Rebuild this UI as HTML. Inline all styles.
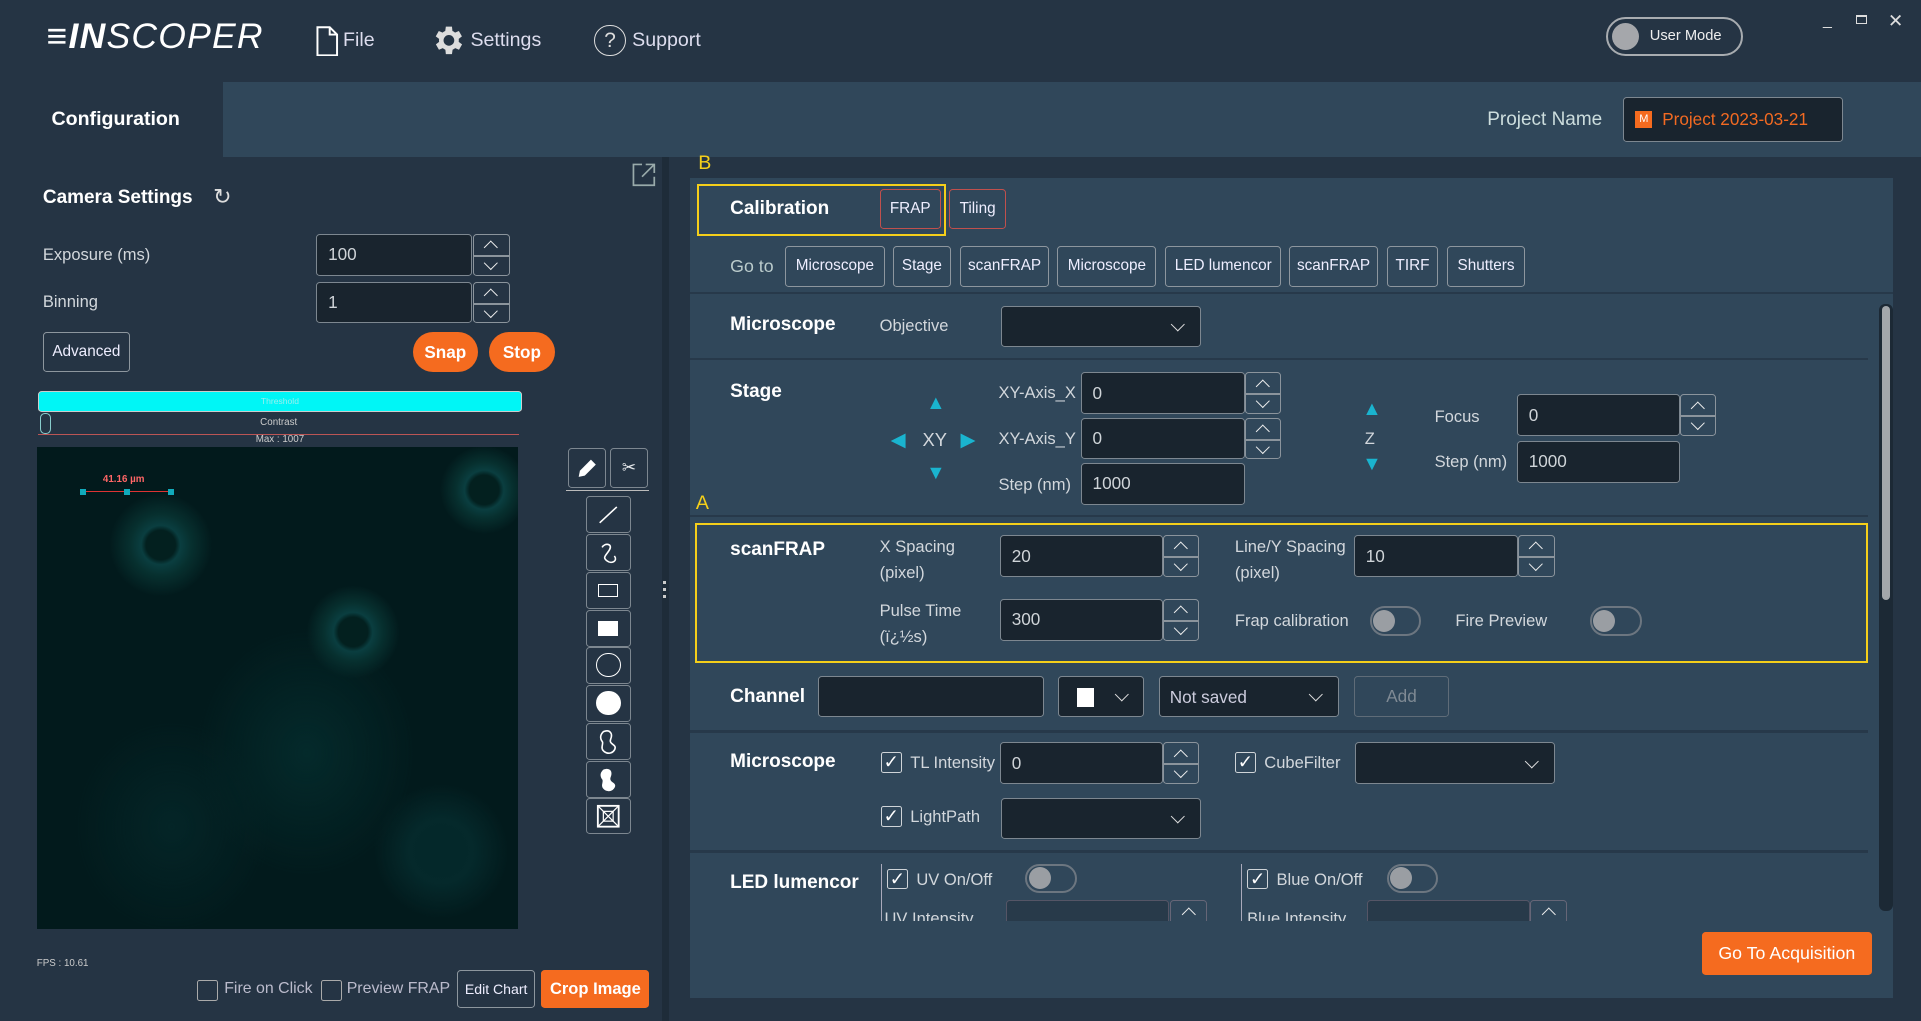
<!DOCTYPE html>
<html><head><meta charset="utf-8"><style>
*{box-sizing:border-box;margin:0;padding:0}
html,body{width:1921px;height:1021px;overflow:hidden;background:#253444}
#w{zoom:1.2251;width:1568px;height:834px;position:relative;font-family:"Liberation Sans",sans-serif;color:#e6e9ec;font-size:14px}
.a{position:absolute;white-space:nowrap}
.h{font-weight:bold;font-size:15.5px;color:#fff}
.l{color:#d2d7dc;font-size:13.5px}
.in{position:absolute;background:#19242e;border:1px solid #7d8790;border-radius:3px;color:#cfd4d8;font-size:14px;padding-left:9px;display:flex;align-items:center}
.sp{position:absolute;width:30px;border:1px solid #8b949c;border-radius:3px}
.sp div{height:50%;display:flex;align-items:center;justify-content:center}
.sp div+div{border-top:2px solid #8b949c}
.up:before,.dn:before{content:"";width:7px;height:7px;border-left:1.4px solid #eee;border-top:1.4px solid #eee;transform:translateY(2px) rotate(45deg)}
.dn:before{transform:translateY(-2px) rotate(225deg)}
.btn{position:absolute;border:1px solid #8d969e;border-radius:3px;color:#eef;font-size:12.5px;display:flex;align-items:center;justify-content:center}
.or{position:absolute;background:#f56b1f;color:#fff;font-size:14px;display:flex;align-items:center;justify-content:center;border-radius:3px}
.dd{position:absolute;background:#19242e;border:1px solid #7d8790;border-radius:3px}
.dd:after{content:"";position:absolute;right:14px;top:50%;width:7px;height:7px;border-right:1.5px solid #ddd;border-bottom:1.5px solid #ddd;transform:translateY(-70%) rotate(45deg)}
.tg{position:absolute;width:42px;height:24px;border:2px solid #6c7680;border-radius:12px}
.tg:before{content:"";position:absolute;left:1px;top:1px;width:18px;height:18px;border-radius:50%;background:#9a9ea3}
.cb{position:absolute;width:17px;height:17px;border:1.5px solid #cfd4d8;border-radius:2px;font-size:15px;line-height:14px;text-align:center;color:#fff}
.sep{position:absolute;left:563px;height:2px;background:#27394a}
.tb{position:absolute;left:478px;width:37px;height:30px;border:1px solid #7d8790;border-radius:3px;display:flex;align-items:center;justify-content:center}
</style></head><body><div id="w">
<div class="a" style="left:38px;top:13px;font-size:29px;font-style:italic;letter-spacing:1px;color:#fff"><b>≡IN</b>SCOPER</div>
<svg class="a" style="left:257px;top:21px" width="20" height="25"><path d="M2 1h10l6 6v17H2z M12 1v6h6" fill="none" stroke="#fff" stroke-width="1.6"/></svg>
<div class="a" style="left:280px;top:24px;font-size:16px;color:#dde">File</div>
<svg class="a" style="left:350px;top:18px" width="30" height="30" viewBox="0 0 24 24"><path fill="#ddd" d="M19.4 13a7.5 7.5 0 000-2l2.1-1.6-2-3.5-2.5 1a7 7 0 00-1.7-1L15 3h-4l-.4 2.9a7 7 0 00-1.7 1l-2.5-1-2 3.5L6.6 11a7.5 7.5 0 000 2l-2.1 1.6 2 3.5 2.5-1a7 7 0 001.7 1L11 21h4l.4-2.9a7 7 0 001.7-1l2.5 1 2-3.5zM13 15.5a3.5 3.5 0 110-7 3.5 3.5 0 010 7z"/></svg>
<div class="a" style="left:384px;top:24px;font-size:16px;color:#dde">Settings</div>
<div class="a" style="left:485px;top:20px;width:26px;height:26px;border:1.3px solid #ddd;border-radius:50%;text-align:center;font-size:17px;line-height:24px;color:#ddd">?</div>
<div class="a" style="left:516px;top:24px;font-size:16px;color:#dde">Support</div>
<div class="a" style="left:1311px;top:14px;width:112px;height:32px;border:2px solid #a8acb0;border-radius:16px"><div class="a" style="left:3px;top:3px;width:22px;height:22px;border-radius:50%;background:#a5a7ab"></div><div class="a" style="left:34px;top:7px;font-size:12px;color:#eee">User Mode</div></div>
<div class="a" style="left:1488px;top:10px;color:#ddd;font-size:13px">_</div>
<div class="a" style="left:1515px;top:12px;width:9px;height:8px;border:1.3px solid #ddd;border-top-width:2px"></div>
<div class="a" style="left:1541px;top:8px;color:#ddd;font-size:15px">✕</div>
<div class="a" style="left:182px;top:67px;width:1386px;height:61px;background:#30475a"></div>
<div class="a h" style="left:42px;top:88px;font-size:16px">Configuration</div>
<div class="a" style="left:1214px;top:89px;font-size:15.5px;color:#cdd">Project Name</div>
<div class="in" style="left:1325px;top:79px;width:179px;height:37px"><span style="display:inline-block;width:14px;height:14px;background:#f56b1f;color:#fff;font-size:9px;text-align:center;line-height:14px;margin-right:8px">M</span><span style="color:#f26a22;font-size:14px">Project 2023-03-21</span></div>
<svg class="a" style="left:515px;top:132px" width="22" height="21"><path d="M9 2H2v17h17v-7M12 2h7v7M19 2L9 12" fill="none" stroke="#9aa" stroke-width="1.4"/></svg>
<div class="a h" style="left:35px;top:153px">Camera Settings</div>
<div class="a" style="left:174px;top:150px;font-size:18px;color:#ddd">↻</div>
<div class="a l" style="left:35px;top:200px">Exposure (ms)</div>
<div class="in" style="left:258px;top:191px;width:127px;height:34px">100</div>
<div class="sp" style="left:386px;top:191px;height:34px"><div class="up"></div><div class="dn"></div></div>
<div class="a l" style="left:35px;top:238px">Binning</div>
<div class="in" style="left:258px;top:230px;width:127px;height:34px">1</div>
<div class="sp" style="left:386px;top:230px;height:34px"><div class="up"></div><div class="dn"></div></div>
<div class="btn" style="left:35px;top:271px;width:71px;height:33px">Advanced</div>
<div class="or" style="left:337px;top:271px;width:53px;height:33px;border-radius:17px;font-weight:bold">Snap</div>
<div class="or" style="left:399px;top:271px;width:54px;height:33px;border-radius:17px;font-weight:bold">Stop</div>
<div class="a" style="left:31px;top:319px;width:395px;height:17px;background:#00f6f6;border:1px solid #ccc;border-radius:3px;text-align:center;font-size:7px;line-height:15px;color:#9ee">Threshold</div>
<div class="a" style="left:31px;top:336px;width:393px;height:19px;border-bottom:1px solid #b55;text-align:center;font-size:8px;line-height:18px;color:#ccc">Contrast</div>
<div class="a" style="left:33px;top:337px;width:9px;height:17px;border:1px solid #8cc;border-radius:4px"></div>
<div class="a" style="left:0;width:457px;top:354px;text-align:center;font-size:8px;color:#ccc">Max : 1007</div>
<div class="a" style="left:30px;top:365px;width:393px;height:393px;background:
radial-gradient(circle at 258px 151px,#03201f 12px,#0a3e40 16px,#07302f 24px,transparent 38px),
radial-gradient(circle at 101px 80px,#03201f 12px,#0a3e40 16px,#07302f 25px,transparent 42px),
radial-gradient(circle at 365px 35px,#03201f 12px,#0a3e40 16px,#07302f 23px,transparent 36px),
radial-gradient(ellipse at 220px 250px,#042a2b,transparent 90px),
radial-gradient(circle at 330px 330px,#04282a 16px,#05292b 26px,transparent 55px),
radial-gradient(ellipse at 110px 310px,#042527,transparent 80px),
#021a1c">
<div class="a" style="left:36px;top:36px;width:75px;height:1px;background:#d33"></div>
<div class="a" style="left:35px;top:34px;width:5px;height:5px;background:#1ab"></div><div class="a" style="left:71px;top:34px;width:5px;height:5px;background:#1ab"></div><div class="a" style="left:107px;top:34px;width:5px;height:5px;background:#1ab"></div>
<div class="a" style="left:54px;top:22px;font-size:8px;font-weight:bold;color:#f66">41.16 µm</div></div>
<div class="tb" style="left:464px;top:366px;width:31px;height:32px"><svg width="20" height="20"><path d="M3 17l1-5 9-9 4 4-9 9z" fill="#fff"/></svg></div>
<div class="tb" style="left:498px;top:366px;width:31px;height:32px">✂</div>
<div class="a" style="left:462px;top:400px;width:68px;height:1px;background:#bbb"></div>
<div class="tb" style="top:405px"><svg width="20" height="20"><path d="M3 17L17 4" stroke="#fff" stroke-width="1.3"/></svg></div>
<div class="tb" style="top:436px"><svg width="20" height="20"><path d="M5 6c2-4 9-3 6 2s-6 6-2 9 9 0 6-4" stroke="#fff" fill="none" stroke-width="1.3"/></svg></div>
<div class="tb" style="top:467px"><div style="width:16px;height:11px;border:1.5px solid #fff"></div></div>
<div class="tb" style="top:498px"><div style="width:16px;height:12px;background:#fff"></div></div>
<div class="tb" style="top:528px"><div style="width:20px;height:20px;border:1.5px solid #fff;border-radius:50%"></div></div>
<div class="tb" style="top:559px"><div style="width:20px;height:20px;background:#fff;border-radius:50%"></div></div>
<div class="tb" style="top:590px"><svg width="20" height="22"><path d="M6 3c5-2 8 1 6 6s6 4 3 9-11 2-10-3 0-3-1-6 1-5 2-6z" stroke="#fff" fill="none" stroke-width="1.3"/></svg></div>
<div class="tb" style="top:621px"><svg width="20" height="22"><path d="M6 3c5-2 8 1 6 6s6 4 3 9-11 2-10-3 0-3-1-6 1-5 2-6z" fill="#fff"/></svg></div>
<div class="tb" style="top:651px"><svg width="20" height="20"><rect x="1.5" y="1.5" width="17" height="17" fill="none" stroke="#fff" stroke-width="1.5"/><path d="M2 2l16 16M18 2L2 18" stroke="#fff"/><rect x="6" y="6" width="8" height="8" fill="none" stroke="#fff"/></svg></div>
<div class="a" style="left:30px;top:782px;font-size:8px;color:#ccc">FPS : 10.61</div>
<div class="cb" style="left:161px;top:800px;border-color:#aaa"></div><div class="a" style="left:183px;top:800px;color:#bbc;font-size:13px">Fire on Click</div>
<div class="cb" style="left:262px;top:800px;border-color:#aaa"></div><div class="a" style="left:283px;top:800px;color:#bbc;font-size:13px">Preview FRAP</div>
<div class="btn" style="left:373px;top:792px;width:64px;height:31px;font-size:11.5px">Edit Chart</div>
<div class="or" style="left:442px;top:792px;width:88px;height:31px;font-weight:bold;font-size:13.5px">Crop Image</div>
<div class="a" style="left:540px;top:128px;width:6px;height:706px;background:#1e2c39"></div>
<div class="a" style="left:541px;top:474px;width:3px;height:14px;border-left:3px dotted #ccc"></div>
<div class="a" style="left:570px;top:124px;color:#f4cf1a;font-size:16px">B</div>
<div class="a" style="left:563px;top:145px;width:982px;height:670px;background:#30475a"></div>
<div class="a" style="left:1534px;top:248px;width:11px;height:496px;background:#1c2935;border-radius:5px"><div style="margin:2px;height:240px;background:#a3a7ab;border-radius:4px"></div></div>
<div class="a" style="left:569px;top:150px;width:203px;height:43px;border:2px solid #f4cf1a"></div>
<div class="a h" style="left:596px;top:162px">Calibration</div>
<div class="btn" style="left:718px;top:154px;width:50px;height:33px;border-color:#c0504d">FRAP</div>
<div class="btn" style="left:775px;top:154px;width:46px;height:33px;border-color:#c0504d">Tiling</div>
<div class="a l" style="left:596px;top:209px;font-size:14.5px;color:#bcc">Go to</div>
<div class="btn" style="left:641px;top:201px;width:81px;height:33px">Microscope</div>
<div class="btn" style="left:729px;top:201px;width:47px;height:33px">Stage</div>
<div class="btn" style="left:784px;top:201px;width:72px;height:33px">scanFRAP</div>
<div class="btn" style="left:863px;top:201px;width:81px;height:33px">Microscope</div>
<div class="btn" style="left:951px;top:201px;width:95px;height:33px">LED lumencor</div>
<div class="btn" style="left:1052px;top:201px;width:73px;height:33px">scanFRAP</div>
<div class="btn" style="left:1132px;top:201px;width:42px;height:33px">TIRF</div>
<div class="btn" style="left:1181px;top:201px;width:64px;height:33px">Shutters</div>
<div class="sep" style="top:238px;width:982px"></div>
<div class="a h" style="left:596px;top:256px">Microscope</div>
<div class="a l" style="left:718px;top:258px">Objective</div>
<div class="dd" style="left:817px;top:250px;width:163px;height:33px"></div>
<div class="sep" style="top:292px;width:962px"></div>
<div class="a h" style="left:596px;top:311px">Stage</div>
<div class="a" style="left:756px;top:320px;color:#1ab4cf;font-size:16px">▲</div>
<div class="a" style="left:727px;top:349px;color:#1ab4cf;font-size:16px">◀</div>
<div class="a l" style="left:753px;top:350px;font-size:15px">XY</div>
<div class="a" style="left:784px;top:349px;color:#1ab4cf;font-size:16px">▶</div>
<div class="a" style="left:756px;top:377px;color:#1ab4cf;font-size:16px">▼</div>
<div class="a l" style="left:815px;top:313px">XY-Axis_X</div>
<div class="in" style="left:882px;top:304px;width:134px;height:34px">0</div>
<div class="sp" style="left:1016px;top:304px;height:34px"><div class="up"></div><div class="dn"></div></div>
<div class="a l" style="left:815px;top:350px">XY-Axis_Y</div>
<div class="in" style="left:882px;top:341px;width:134px;height:34px">0</div>
<div class="sp" style="left:1016px;top:341px;height:34px"><div class="up"></div><div class="dn"></div></div>
<div class="a l" style="left:815px;top:388px">Step (nm)</div>
<div class="in" style="left:882px;top:378px;width:134px;height:34px">1000</div>
<div class="a" style="left:1112px;top:325px;color:#1ab4cf;font-size:16px">▲</div>
<div class="a l" style="left:1114px;top:350px">Z</div>
<div class="a" style="left:1112px;top:370px;color:#1ab4cf;font-size:16px">▼</div>
<div class="a l" style="left:1171px;top:332px">Focus</div>
<div class="in" style="left:1238px;top:322px;width:133px;height:34px">0</div>
<div class="sp" style="left:1371px;top:322px;height:34px"><div class="up"></div><div class="dn"></div></div>
<div class="a l" style="left:1171px;top:369px">Step (nm)</div>
<div class="in" style="left:1238px;top:360px;width:133px;height:34px">1000</div>
<div class="a" style="left:568px;top:402px;color:#f4cf1a;font-size:16px">A</div>
<div class="sep" style="top:420px;width:962px"></div>
<div class="a" style="left:567px;top:427px;width:958px;height:114px;border:2px solid #f4cf1a"></div>
<div class="a h" style="left:596px;top:440px">scanFRAP</div>
<div class="a l" style="left:718px;top:436px;line-height:21px">X Spacing<br>(pixel)</div>
<div class="in" style="left:816px;top:437px;width:133px;height:34px">20</div>
<div class="sp" style="left:949px;top:437px;height:34px"><div class="up"></div><div class="dn"></div></div>
<div class="a l" style="left:1008px;top:436px;line-height:21px">Line/Y Spacing<br>(pixel)</div>
<div class="in" style="left:1105px;top:437px;width:134px;height:34px">10</div>
<div class="sp" style="left:1239px;top:437px;height:34px"><div class="up"></div><div class="dn"></div></div>
<div class="a l" style="left:718px;top:488px;line-height:21px">Pulse Time<br>(ï¿½s)</div>
<div class="in" style="left:816px;top:489px;width:133px;height:34px">300</div>
<div class="sp" style="left:949px;top:489px;height:34px"><div class="up"></div><div class="dn"></div></div>
<div class="a l" style="left:1008px;top:499px">Frap calibration</div>
<div class="tg" style="left:1118px;top:495px"></div>
<div class="a l" style="left:1188px;top:499px">Fire Preview</div>
<div class="tg" style="left:1298px;top:495px"></div>
<div class="a h" style="left:596px;top:560px">Channel</div>
<div class="in" style="left:668px;top:552px;width:184px;height:33px"></div>
<div class="dd" style="left:864px;top:552px;width:70px;height:33px"><div class="a" style="left:14px;top:9px;width:14px;height:15px;background:#fff"></div></div>
<div class="dd" style="left:946px;top:552px;width:147px;height:33px"><span class="a" style="left:8px;top:8px;color:#ccd;font-size:14px">Not saved</span></div>
<div class="btn" style="left:1105px;top:552px;width:78px;height:33px;border-color:#5f6c78;color:#7f8a94;font-size:14px">Add</div>
<div class="sep" style="top:596px;width:962px"></div>
<div class="a h" style="left:596px;top:613px">Microscope</div>
<div class="cb" style="left:719px;top:614px">✓</div><div class="a l" style="left:743px;top:615px">TL Intensity</div>
<div class="in" style="left:816px;top:606px;width:133px;height:34px">0</div>
<div class="sp" style="left:949px;top:606px;height:34px"><div class="up"></div><div class="dn"></div></div>
<div class="cb" style="left:1008px;top:614px">✓</div><div class="a l" style="left:1032px;top:615px">CubeFilter</div>
<div class="dd" style="left:1106px;top:606px;width:163px;height:34px"></div>
<div class="cb" style="left:719px;top:658px">✓</div><div class="a l" style="left:743px;top:659px">LightPath</div>
<div class="dd" style="left:817px;top:651px;width:163px;height:34px"></div>
<div class="sep" style="top:694px;width:962px"></div>
<div class="a h" style="left:596px;top:712px">LED lumencor</div>
<div class="a" style="left:563px;top:700px;width:970px;height:52px;overflow:hidden">
<div class="a" style="left:156px;top:5px;width:1px;height:50px;background:#aab"></div>
<div class="cb" style="left:161px;top:9px">✓</div><div class="a l" style="left:185px;top:10px">UV On/Off</div>
<div class="tg" style="left:274px;top:5px"></div>
<div class="a l" style="left:159px;top:42px">UV Intensity</div>
<div class="in" style="left:258px;top:35px;width:133px;height:34px;background:#283a4a;border-color:#556"></div>
<div class="sp" style="left:392px;top:35px;height:34px;border-color:#667"><div class="up"></div></div>
<div class="a" style="left:450px;top:5px;width:1px;height:50px;background:#aab"></div>
<div class="cb" style="left:455px;top:9px">✓</div><div class="a l" style="left:479px;top:10px">Blue On/Off</div>
<div class="tg" style="left:569px;top:5px"></div>
<div class="a l" style="left:455px;top:42px">Blue Intensity</div>
<div class="in" style="left:553px;top:35px;width:133px;height:34px;background:#283a4a;border-color:#556"></div>
<div class="sp" style="left:686px;top:35px;height:34px;border-color:#667"><div class="up"></div></div>
</div>
<div class="or" style="left:1389px;top:761px;width:139px;height:35px;font-size:14.5px">Go To Acquisition</div>
</div></body></html>
